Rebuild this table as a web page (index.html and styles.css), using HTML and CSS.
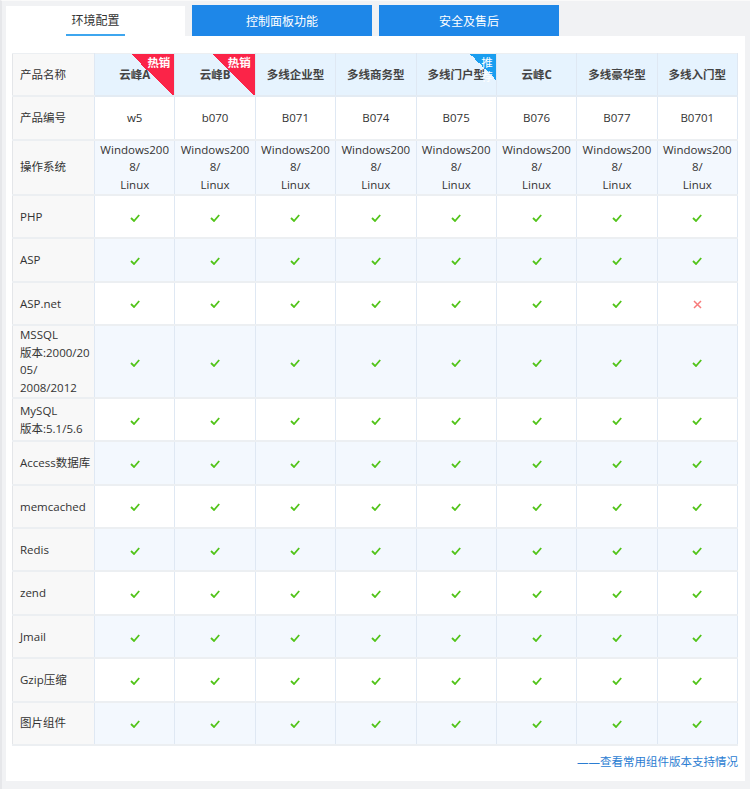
FILE: index.html
```html
<!DOCTYPE html>
<html lang="zh">
<head>
<meta charset="utf-8">
<title>环境配置</title>
<link rel="stylesheet" href="styles.css">
</head>
<body>
<div class="wrap">
  <div class="tabs">
    <div class="tab active"><span class="tab-label">环境配置</span></div>
    <div class="tab">控制面板功能</div>
    <div class="tab">安全及售后</div>
  </div>
  <div class="panel">
    <table class="spec">
      <colgroup>
        <col class="c-first">
        <col><col><col><col><col><col><col><col>
      </colgroup>
      <thead>
        <tr>
          <th class="label">产品名称</th>
          <th class="prod"><span class="badge hot"><span class="badge-text">热销</span></span>云峰A</th>
          <th class="prod"><span class="badge hot"><span class="badge-text">热销</span></span>云峰B</th>
          <th class="prod">多线企业型</th>
          <th class="prod">多线商务型</th>
          <th class="prod"><span class="badge rec"><span class="badge-text">推荐</span></span>多线门户型</th>
          <th class="prod">云峰C</th>
          <th class="prod">多线豪华型</th>
          <th class="prod">多线入门型</th>
        </tr>
      </thead>
      <tbody>
        <tr>
          <td class="label">产品编号</td>
          <td>w5</td><td>b070</td><td>B071</td><td>B074</td><td>B075</td><td>B076</td><td>B077</td><td>B0701</td>
        </tr>
        <tr class="alt">
          <td class="label">操作系统</td>
          <td>Windows200<br>8/<br>Linux</td>
          <td>Windows200<br>8/<br>Linux</td>
          <td>Windows200<br>8/<br>Linux</td>
          <td>Windows200<br>8/<br>Linux</td>
          <td>Windows200<br>8/<br>Linux</td>
          <td>Windows200<br>8/<br>Linux</td>
          <td>Windows200<br>8/<br>Linux</td>
          <td>Windows200<br>8/<br>Linux</td>
        </tr>
        <tr>
          <td class="label">PHP</td>
          <td><i class="ok"></i></td><td><i class="ok"></i></td><td><i class="ok"></i></td><td><i class="ok"></i></td><td><i class="ok"></i></td><td><i class="ok"></i></td><td><i class="ok"></i></td><td><i class="ok"></i></td>
        </tr>
        <tr class="alt">
          <td class="label">ASP</td>
          <td><i class="ok"></i></td><td><i class="ok"></i></td><td><i class="ok"></i></td><td><i class="ok"></i></td><td><i class="ok"></i></td><td><i class="ok"></i></td><td><i class="ok"></i></td><td><i class="ok"></i></td>
        </tr>
        <tr>
          <td class="label">ASP.net</td>
          <td><i class="ok"></i></td><td><i class="ok"></i></td><td><i class="ok"></i></td><td><i class="ok"></i></td><td><i class="ok"></i></td><td><i class="ok"></i></td><td><i class="ok"></i></td><td><i class="no"></i></td>
        </tr>
        <tr class="alt">
          <td class="label">MSSQL<br>版本:2000/20<br>05/<br>2008/2012</td>
          <td><i class="ok"></i></td><td><i class="ok"></i></td><td><i class="ok"></i></td><td><i class="ok"></i></td><td><i class="ok"></i></td><td><i class="ok"></i></td><td><i class="ok"></i></td><td><i class="ok"></i></td>
        </tr>
        <tr>
          <td class="label">MySQL<br>版本:5.1/5.6</td>
          <td><i class="ok"></i></td><td><i class="ok"></i></td><td><i class="ok"></i></td><td><i class="ok"></i></td><td><i class="ok"></i></td><td><i class="ok"></i></td><td><i class="ok"></i></td><td><i class="ok"></i></td>
        </tr>
        <tr class="alt">
          <td class="label">Access数据库</td>
          <td><i class="ok"></i></td><td><i class="ok"></i></td><td><i class="ok"></i></td><td><i class="ok"></i></td><td><i class="ok"></i></td><td><i class="ok"></i></td><td><i class="ok"></i></td><td><i class="ok"></i></td>
        </tr>
        <tr>
          <td class="label">memcached</td>
          <td><i class="ok"></i></td><td><i class="ok"></i></td><td><i class="ok"></i></td><td><i class="ok"></i></td><td><i class="ok"></i></td><td><i class="ok"></i></td><td><i class="ok"></i></td><td><i class="ok"></i></td>
        </tr>
        <tr class="alt">
          <td class="label">Redis</td>
          <td><i class="ok"></i></td><td><i class="ok"></i></td><td><i class="ok"></i></td><td><i class="ok"></i></td><td><i class="ok"></i></td><td><i class="ok"></i></td><td><i class="ok"></i></td><td><i class="ok"></i></td>
        </tr>
        <tr>
          <td class="label">zend</td>
          <td><i class="ok"></i></td><td><i class="ok"></i></td><td><i class="ok"></i></td><td><i class="ok"></i></td><td><i class="ok"></i></td><td><i class="ok"></i></td><td><i class="ok"></i></td><td><i class="ok"></i></td>
        </tr>
        <tr class="alt">
          <td class="label">Jmail</td>
          <td><i class="ok"></i></td><td><i class="ok"></i></td><td><i class="ok"></i></td><td><i class="ok"></i></td><td><i class="ok"></i></td><td><i class="ok"></i></td><td><i class="ok"></i></td><td><i class="ok"></i></td>
        </tr>
        <tr>
          <td class="label">Gzip压缩</td>
          <td><i class="ok"></i></td><td><i class="ok"></i></td><td><i class="ok"></i></td><td><i class="ok"></i></td><td><i class="ok"></i></td><td><i class="ok"></i></td><td><i class="ok"></i></td><td><i class="ok"></i></td>
        </tr>
        <tr class="alt">
          <td class="label">图片组件</td>
          <td><i class="ok"></i></td><td><i class="ok"></i></td><td><i class="ok"></i></td><td><i class="ok"></i></td><td><i class="ok"></i></td><td><i class="ok"></i></td><td><i class="ok"></i></td><td><i class="ok"></i></td>
        </tr>
      </tbody>
    </table>
    <div class="more"><a href="#">——查看常用组件版本支持情况</a></div>
  </div>
</div>
</body>
</html>
```
FILE: styles.css
```css
html, body {
  margin: 0;
  padding: 0;
}
body {
  background: #f1f2f4;
  font-family: "Open Sans", "Noto Sans CJK SC", sans-serif;
  font-size: 11.5px;
  color: #333;
}
.wrap {
  width: 750px;
  height: 789px;
  box-sizing: border-box;
  padding: 4px 5px 0 4px;
  border-left: 2px solid #e6e7ea;
  border-top: 1px solid #fafafa;
}
.tabs {
  display: flex;
  gap: 7px;
  height: 31px;
}
.tab {
  width: 180px;
  height: 31px;
  background: #1e87e8;
  color: #fff;
  display: flex;
  align-items: center;
  justify-content: center;
  font-size: 12px;
}
.tab.active {
  width: 179px;
  background: #fff;
  color: #333;
  margin-top: 1px;
  height: 30px;
}
.tab-label {
  position: relative;
  display: inline-block;
  padding: 0 5px;
  line-height: 30px;
}
.tab-label::after {
  content: "";
  position: absolute;
  left: 0;
  right: 0;
  bottom: 0;
  height: 2px;
  background: #3ea6ef;
}
.panel {
  background: #fff;
  width: 739px;
  box-sizing: border-box;
  padding: 17px 7px 0 6px;
  height: 745px;
}
.spec {
  width: 726px;
  border-collapse: collapse;
  table-layout: fixed;
}
.c-first {
  width: 82px;
}
.spec th,
.spec td {
  border: 1px solid #dfe8f3;
  border-top-color: #eceff2;
  border-bottom: 2px solid #eceff2;
  height: 41.4px;
  padding: 0 4px;
  line-height: 17.7px;
  text-align: center;
  white-space: nowrap;
  background: #fff;
  font-weight: normal;
}
.spec tr.alt td {
  background: #f3f8fe;
}
.spec th.prod {
  background: #e6f3fe;
  color: #444;
  font-weight: bold;
  position: relative;
  overflow: hidden;
  border-bottom-color: #e3ebf3;
}
.spec th.label,
.spec td.label,
.spec tr.alt td.label {
  background: #f8f8f8;
  text-align: left;
  padding-left: 7px;
  color: #333;
  border-left-color: #e4e6e9;
}
.badge {
  position: absolute;
  top: 0;
  right: 0;
}
.badge.hot {
  width: 43px;
  height: 43px;
  background: linear-gradient(to bottom left, #fb2448 50%, transparent 50%);
}
.badge.rec {
  width: 26px;
  height: 26px;
  background: linear-gradient(to bottom left, #1a9ef0 50%, transparent 50%);
}
.badge-text {
  position: absolute;
  color: #fff;
  font-weight: bold;
  font-size: 11.5px;
  line-height: 14px;
}
.hot .badge-text {
  top: 2px;
  right: 4px;
}
.rec .badge-text {
  top: 2px;
  right: 3px;
  width: 12px;
  white-space: normal;
  font-weight: normal;
}
.ok {
  display: inline-block;
  width: 10px;
  height: 8px;
  vertical-align: middle;
  background: url("data:image/svg+xml;utf8,<svg xmlns='http://www.w3.org/2000/svg' width='10' height='8' viewBox='0 0 10 8'><polyline points='1,4 4,7 9.2,1' fill='none' stroke='%2352c41a' stroke-width='1.8'/></svg>") no-repeat center;
}
.no {
  display: inline-block;
  width: 9px;
  height: 9px;
  vertical-align: middle;
  background: url("data:image/svg+xml;utf8,<svg xmlns='http://www.w3.org/2000/svg' width='9' height='9' viewBox='0 0 9 9'><path d='M1,1 L8,8 M8,1 L1,8' fill='none' stroke='%23f77b7b' stroke-width='1.5'/></svg>") no-repeat center;
}
.more {
  text-align: right;
  padding-top: 7px;
  line-height: 18px;
}
.more a {
  color: #2b7dd2;
  text-decoration: none;
  font-size: 11.5px;
}
```
